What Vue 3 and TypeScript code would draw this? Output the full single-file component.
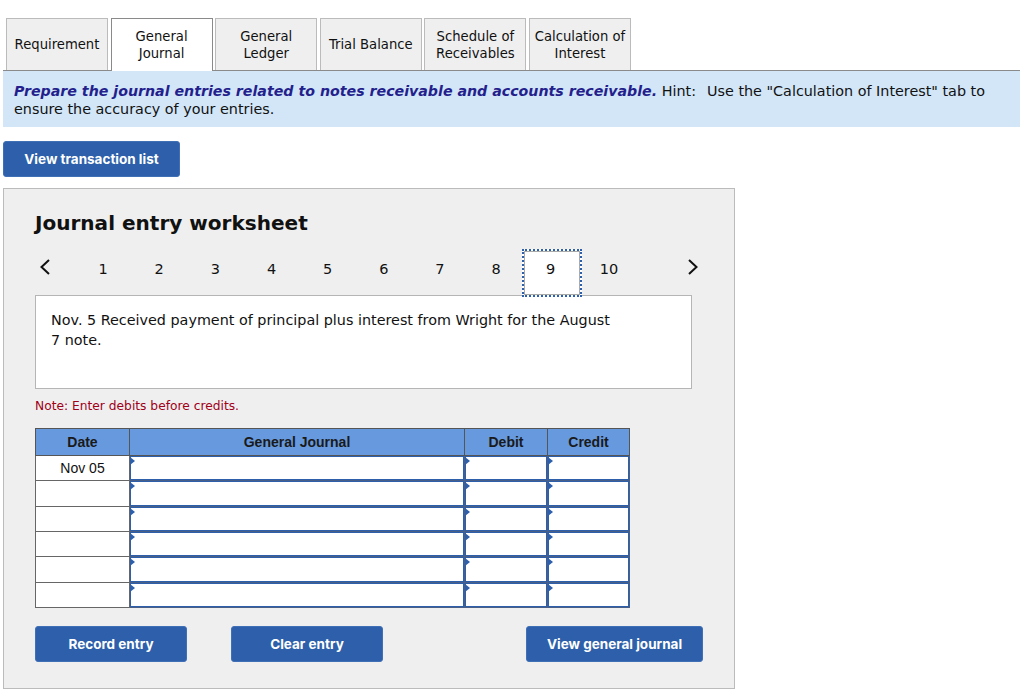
<script setup lang="ts">
const tabs = [
  { label: ['Requirement'] },
  { label: ['General', 'Journal'], active: true },
  { label: ['General', 'Ledger'] },
  { label: ['Trial Balance'] },
  { label: ['Schedule of', 'Receivables'] },
  { label: ['Calculation of', 'Interest'] },
]
const pages = [1, 2, 3, 4, 5, 6, 7, 8, 9, 10]
const rows = ['Nov 05', '', '', '', '', '']
</script>

<template>
  <div class="page">
    <div class="tabs">
      <div v-for="t in tabs" :key="t.label.join()" class="tab" :class="{ active: t.active }">
        <span v-for="l in t.label" :key="l">{{ l }}</span>
      </div>
    </div>
    <div class="banner">
      <b>Prepare the journal entries related to notes receivable and accounts receivable.</b> <span class="hint">Hint:</span> <span>Use the "Calculation of Interest" tab to</span> <span>ensure the accuracy of your entries.</span>
    </div>
    <button class="btn list-btn">View transaction list</button>
    <section class="panel">
      <h2>Journal entry worksheet</h2>
      <div class="nav">
        <svg class="chev left" width="14" height="18" viewBox="0 0 14 18"><path d="M11 2 3.500 9l7.500 7" fill="none" stroke="#111" stroke-width="2"/></svg>
        <div class="nums">
          <span v-for="p in pages" :key="p" class="num" :class="{ sel: p === 9 }">{{ p }}</span>
        </div>
        <svg class="chev right" width="14" height="18" viewBox="0 0 14 18"><path d="M3 2l7.500 7L3 16" fill="none" stroke="#111" stroke-width="2"/></svg>
      </div>
      <div class="prompt">Nov. 5 Received payment of principal plus interest from Wright for the August 7 note.</div>
      <p class="note">Note: Enter debits before credits.</p>
      <table class="journal">
        <colgroup>
          <col class="c-date" /><col class="c-gj" /><col class="c-amt" /><col class="c-last" />
        </colgroup>
        <thead>
          <tr><th>Date</th><th>General Journal</th><th>Debit</th><th>Credit</th></tr>
        </thead>
        <tbody>
          <tr v-for="(r, i) in rows" :key="i">
            <td class="date">{{ r }}</td>
            <td v-for="c in 3" :key="c" class="entry"><div class="field"></div></td>
          </tr>
        </tbody>
      </table>
      <div class="actions">
        <button class="btn act">Record entry</button>
        <button class="btn act clear">Clear entry</button>
        <button class="btn act view">View general journal</button>
      </div>
    </section>
  </div>
</template>

<style>
html, body { margin: 0; background: #fff; }
</style>

<style scoped>
.page {
  width: 1024px;
  height: 693px;
  overflow: hidden;
  box-sizing: border-box;
  padding: 18px 4px 0 3px;
  font-family: "DejaVu Sans", Verdana, sans-serif;
  font-size: 14px;
  color: #111;
}
.tabs {
  display: flex;
  gap: 2.6px;
  padding-left: 3px;
  height: 53px;
  box-sizing: border-box;
  border-bottom: 1px solid #8a8a8a;
}
.tab {
  width: 102px;
  box-sizing: border-box;
  height: 52px;
  background: #efefef;
  border: 1px solid #bbb;
  border-bottom: 0;
  display: flex;
  flex-direction: column;
  align-items: center;
  justify-content: center;
  font-size: 13.2px;
  line-height: 17px;
  white-space: nowrap;
}
.tab.active {
  background: #fff;
  border-color: #8a8a8a;
  height: 53px;
  position: relative;
  z-index: 1;
}
.banner {
  background: #d2e6f8;
  height: 56px;
  box-sizing: border-box;
  padding: 11px 11px 0;
  font-size: 14.35px;
  line-height: 18px;
}
.banner b {
  color: #241f8c;
  font-style: italic;
  font-size: 14.2px;
}
.hint { margin-right: 6.5px; }
.btn {
  display: block;
  background: #2d5fab;
  color: #fff;
  border: 1px solid #3f6fb5;
  border-radius: 3px;
  height: 36px;
  padding: 0;
  font-family: Inter, Roboto, sans-serif;
  font-weight: 700;
  font-size: 13.5px;
}
.list-btn {
  width: 177px;
  margin-top: 14px;
}
.panel {
  width: 732px;
  height: 501px;
  margin-top: 11px;
  box-sizing: border-box;
  background: #efefef;
  border: 1px solid #bbb;
  padding: 0 0 0 31px;
}
h2 {
  margin: 0;
  padding-top: 21px;
  font-size: 20.05px;
  line-height: 27px;
  font-weight: 700;
  color: #111;
}
.nav {
  display: flex;
  align-items: flex-start;
  height: 46px;
  margin-top: 12px;
  width: 665px;
  position: relative;
  z-index: 1;
}
.chev {
  margin-top: 9px;
  flex: none;
}
.chev.left { margin-left: 2.5px; }
.chev.right { margin-left: auto; }
.nums {
  display: flex;
  margin-left: 23.5px;
}
.num {
  width: 56.15px;
  height: 42px;
  padding-top: 11px;
  box-sizing: border-box;
  text-align: center;
  font-size: 14.5px;
  line-height: 18px;
}
.num.sel {
  width: 60px;
  margin-left: -2px;
  margin-right: -1.2px;
  height: 48px;
  background: #fff;
  outline: 2px dotted #2d5fab;
  outline-offset: -2px;
  border: 2px solid transparent;
  padding: 9px 3px 0 0;
  box-shadow: inset 0 0 0 1px #aaa;
}
.prompt {
  width: 657px;
  height: 94px;
  box-sizing: border-box;
  background: #fff;
  border: 1px solid #b5b5b5;
  padding: 14px 70px 0 15px;
  font-size: 14.35px;
  line-height: 20px;
}
.note {
  margin: 9px 0 0;
  color: #a00018;
  font-size: 12.26px;
  line-height: 16px;
}
.journal {
  border-collapse: collapse;
  table-layout: fixed;
  width: 594px;
  margin-top: 14px;
  font-family: "Liberation Sans", Arial, sans-serif;
  font-size: 14px;
}
.c-date { width: 94px; }
.c-gj { width: 335px; }
.c-amt { width: 83px; }
.c-last { width: 82px; }
th {
  height: 26px;
  padding: 0;
  background: #6699de;
  border: 1px solid #555;
  font-weight: 700;
  color: #1a1a1a;
}
td {
  height: 24.33px;
  padding: 0;
  background: #fff;
  border: 1px solid #666;
}
.date { text-align: center; }
.entry { border-color: #4a5f85; }
.field {
  height: 24.33px;
  box-sizing: border-box;
  border: 1px solid #2d5fab;
  background: #fff;
  position: relative;
}
.field::before {
  content: "";
  position: absolute;
  left: -1px;
  top: 0;
  border-left: 5px solid #2d5fab;
  border-top: 4px solid transparent;
  border-bottom: 4px solid transparent;
}
.actions {
  display: flex;
  margin-top: 18px;
}
.act { width: 152px; }
.clear { margin-left: 44px; }
.view { width: 177px; margin-left: 143px; }
</style>
